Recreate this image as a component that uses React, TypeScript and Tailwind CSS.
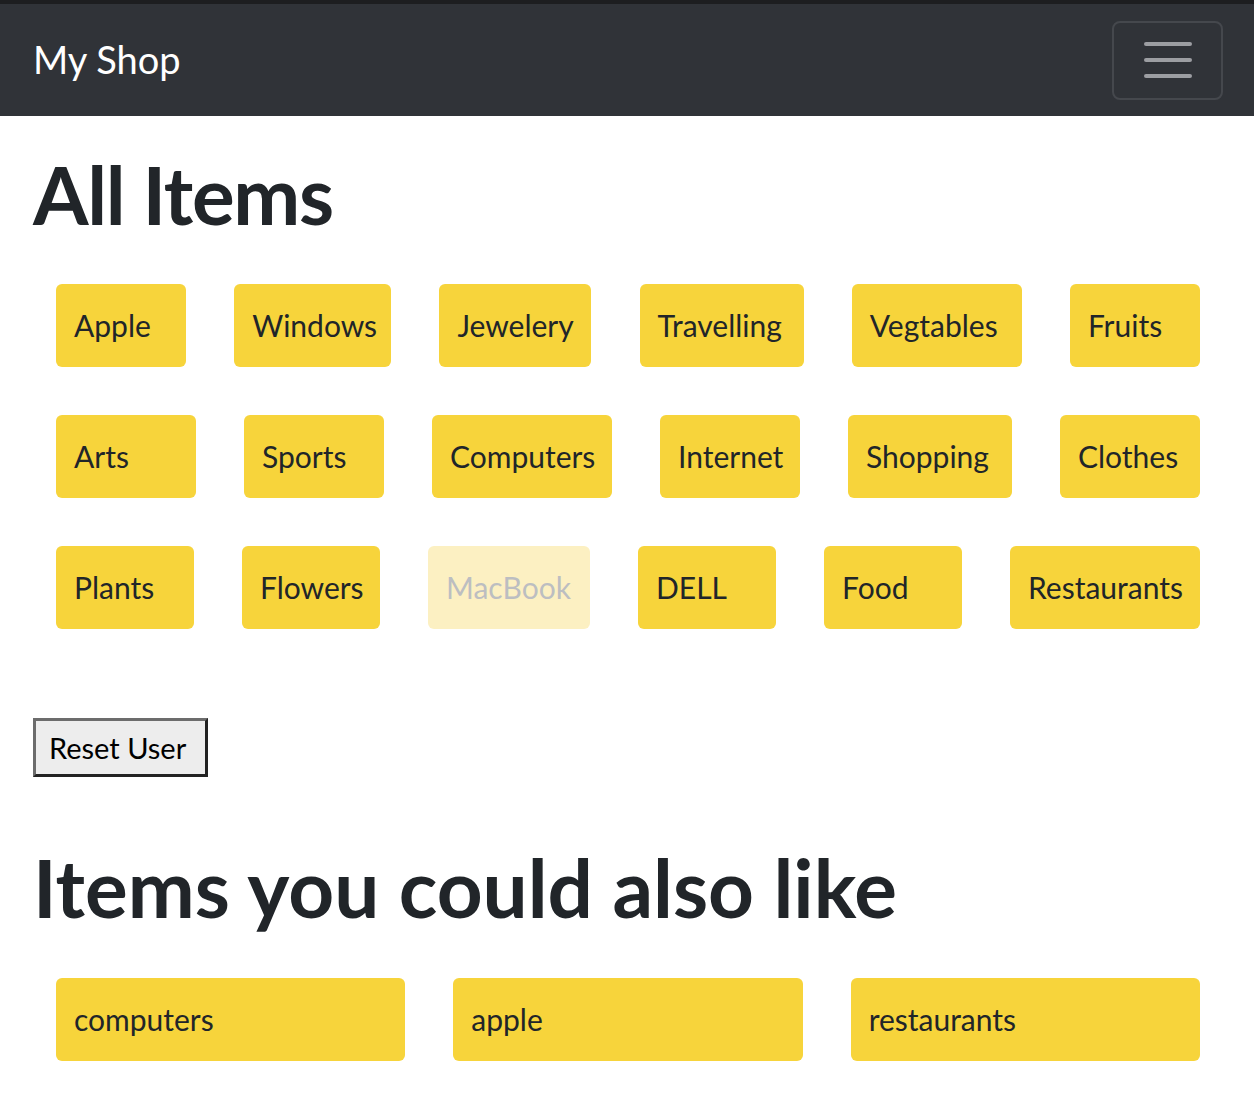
import React from "react";

const rows: { label: string; w: string; disabled?: boolean }[][] = [
  [
    { label: "Apple", w: "w-[130px]" },
    { label: "Windows", w: "w-[157px]" },
    { label: "Jewelery", w: "w-[152px]" },
    { label: "Travelling", w: "w-[164px]" },
    { label: "Vegtables", w: "w-[170px]" },
    { label: "Fruits", w: "w-[130px]" },
  ],
  [
    { label: "Arts", w: "w-[140px]" },
    { label: "Sports", w: "w-[140px]" },
    { label: "Computers", w: "w-[180px]" },
    { label: "Internet", w: "w-[140px]" },
    { label: "Shopping", w: "w-[164px]" },
    { label: "Clothes", w: "w-[140px]" },
  ],
  [
    { label: "Plants", w: "w-[138px]" },
    { label: "Flowers", w: "w-[138px]" },
    { label: "MacBook", w: "w-[162px]", disabled: true },
    { label: "DELL", w: "w-[138px]" },
    { label: "Food", w: "w-[138px]" },
    { label: "Restaurants", w: "w-[190px]" },
  ],
];

const suggestions = ["computers", "apple", "restaurants"];

export default function App() {
  return (
    <div className="min-h-[1120px] bg-white font-['Lato','Noto_Sans',sans-serif] text-[#212529]">
      <div className="h-[4px] bg-[#1d1e20]" />
      <nav className="flex h-[112px] items-center justify-between bg-[#303338] pl-[33px] pr-[31px]">
        <span className="-mt-[3px] text-[38px] leading-none text-white">My Shop</span>
        <button className="flex h-[79px] w-[111px] items-center justify-center rounded-[8px] border-2 border-[#45484d]">
          <svg width="50" height="38" viewBox="0 0 50 38">
            <g stroke="#9c9ea2" strokeWidth="4" strokeLinecap="round">
              <line x1="3" y1="3" x2="47" y2="3" />
              <line x1="3" y1="19" x2="47" y2="19" />
              <line x1="3" y1="35" x2="47" y2="35" />
            </g>
          </svg>
        </button>
      </nav>

      <main className="px-[33px]">
        <h1 className="mt-[30px] text-[80px] font-bold leading-[96px] tracking-[-1.3px]">All Items</h1>

        <div className="mt-[42px] flex flex-col gap-[48px] pl-[23px] pr-[21px]">
          {rows.map((row, i) => (
            <div key={i} className="flex justify-between">
              {row.map((it) => (
                <div
                  key={it.label}
                  className={`${it.w} flex h-[83px] items-center rounded-[6px] px-[18px] text-[30px] ${
                    it.disabled ? "bg-[#fcf0c2] text-[#bcbec1]" : "bg-[#f7d43b] text-[#212529]"
                  }`}
                >
                  {it.label}
                </div>
              ))}
            </div>
          ))}
        </div>

        <button className="mt-[89px] flex h-[59px] w-[175px] items-center border-[3px] border-t-[#6c6c6c] border-l-[#6c6c6c] border-r-[#222] border-b-[#222] bg-[#ededed] pl-[13px] text-[29px] text-black">
          Reset User
        </button>

        <h2 className="mt-[62px] text-[80px] font-bold leading-[96px]">Items you could also like</h2>

        <div className="mt-[43px] flex gap-[48px] pl-[23px] pr-[21px]">
          {suggestions.map((s) => (
            <div
              key={s}
              className="flex h-[83px] flex-1 items-center rounded-[6px] bg-[#f7d43b] px-[18px] text-[30px]"
            >
              {s}
            </div>
          ))}
        </div>
      </main>
    </div>
  );
}
